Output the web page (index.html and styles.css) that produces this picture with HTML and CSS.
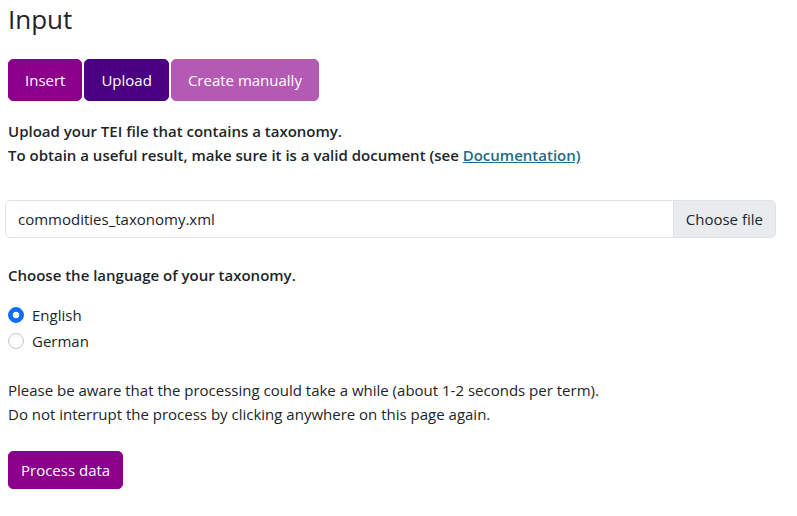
FILE: index.html
```html
<!DOCTYPE html>
<html lang="en">
<head>
<meta charset="utf-8">
<title>Input</title>
<link rel="stylesheet" href="styles.css">
</head>
<body>
<main class="page">
  <h1 class="title">Input</h1>
  <div class="tabs">
    <button class="btn btn-insert" type="button">Insert</button>
    <button class="btn btn-upload" type="button">Upload</button>
    <button class="btn btn-manual" type="button">Create manually</button>
  </div>
  <p class="lead-text">Upload your TEI file that contains a taxonomy.<br>To obtain a useful result, make sure it is a valid document (see <a class="doc-link" href="#">Documentation)</a></p>
  <label class="file-group">
    <span class="file-name">commodities_taxonomy.xml</span>
    <span class="file-btn">Choose file</span>
  </label>
  <p class="question">Choose the language of your taxonomy.</p>
  <div class="radios">
    <label class="radio-row"><input class="radio" type="radio" name="lang" checked><span>English</span></label>
    <label class="radio-row"><input class="radio" type="radio" name="lang"><span>German</span></label>
  </div>
  <p class="note">Please be aware that the processing could take a while (about 1-2 seconds per term).<br>Do not interrupt the process by clicking anywhere on this page again.</p>
  <button class="btn btn-process" type="button">Process data</button>
</main>
</body>
</html>
```
FILE: styles.css
```css
* { box-sizing: border-box; }
html, body { margin: 0; padding: 0; background: #fff; }
body {
  font-family: "Open Sans", "Noto Sans", sans-serif;
  font-size: 15px;
  line-height: 24px;
  color: #212529;
}
.page { padding: 0 8px; }
.title {
  margin: 2px 0 0;
  font-size: 26px;
  line-height: 34px;
  font-weight: 400;
}
.tabs {
  display: flex;
  gap: 2px;
  margin-top: 23px;
}
.btn {
  font-family: inherit;
  font-size: 15px;
  line-height: 24px;
  color: #fff;
  border: 1px solid transparent;
  border-radius: 5px;
  cursor: pointer;
}
.tabs .btn { padding: 8px 16px; }
.btn-insert { background: #8b008b; border-color: #8b008b; }
.btn-upload { background: #4b0082; border-color: #4b0082; }
.btn-manual { background: #b459b4; border-color: #b459b4; }
.lead-text {
  margin: 18px 0 0;
  font-weight: 600;
}
.doc-link { color: #216b86; text-decoration: underline; }
.file-group {
  display: flex;
  margin: 33px 13px 0 -3px;
  height: 38px;
  border: 1px solid #dee2e6;
  border-radius: 5px;
  overflow: hidden;
}
.file-name {
  flex: 1;
  padding: 6px 12px;
}
.file-btn {
  padding: 6px 12px;
  background: #e9ecef;
  border-left: 1px solid #dee2e6;
}
.question {
  margin: 25px 0 0;
  font-weight: 600;
}
.radios { margin-top: 16px; }
.radio-row {
  display: flex;
  align-items: flex-start;
  gap: 8px;
  min-height: 24px;
  margin-bottom: 2px;
}
.radio {
  appearance: none;
  -webkit-appearance: none;
  width: 16px;
  height: 16px;
  margin: 4px 0 0;
  border: 1px solid #c4c4c4;
  border-radius: 50%;
  background: #fff;
  flex: none;
}
.radio:checked {
  border-color: #0d6efd;
  background: radial-gradient(circle, #fff 0, #fff 3px, #0d6efd 3.6px);
}
.note { margin: 25px 0 0; }
.btn-process {
  margin-top: 25px;
  padding: 6px 12px;
  background: #8b008b;
  border-color: #8b008b;
}
```
